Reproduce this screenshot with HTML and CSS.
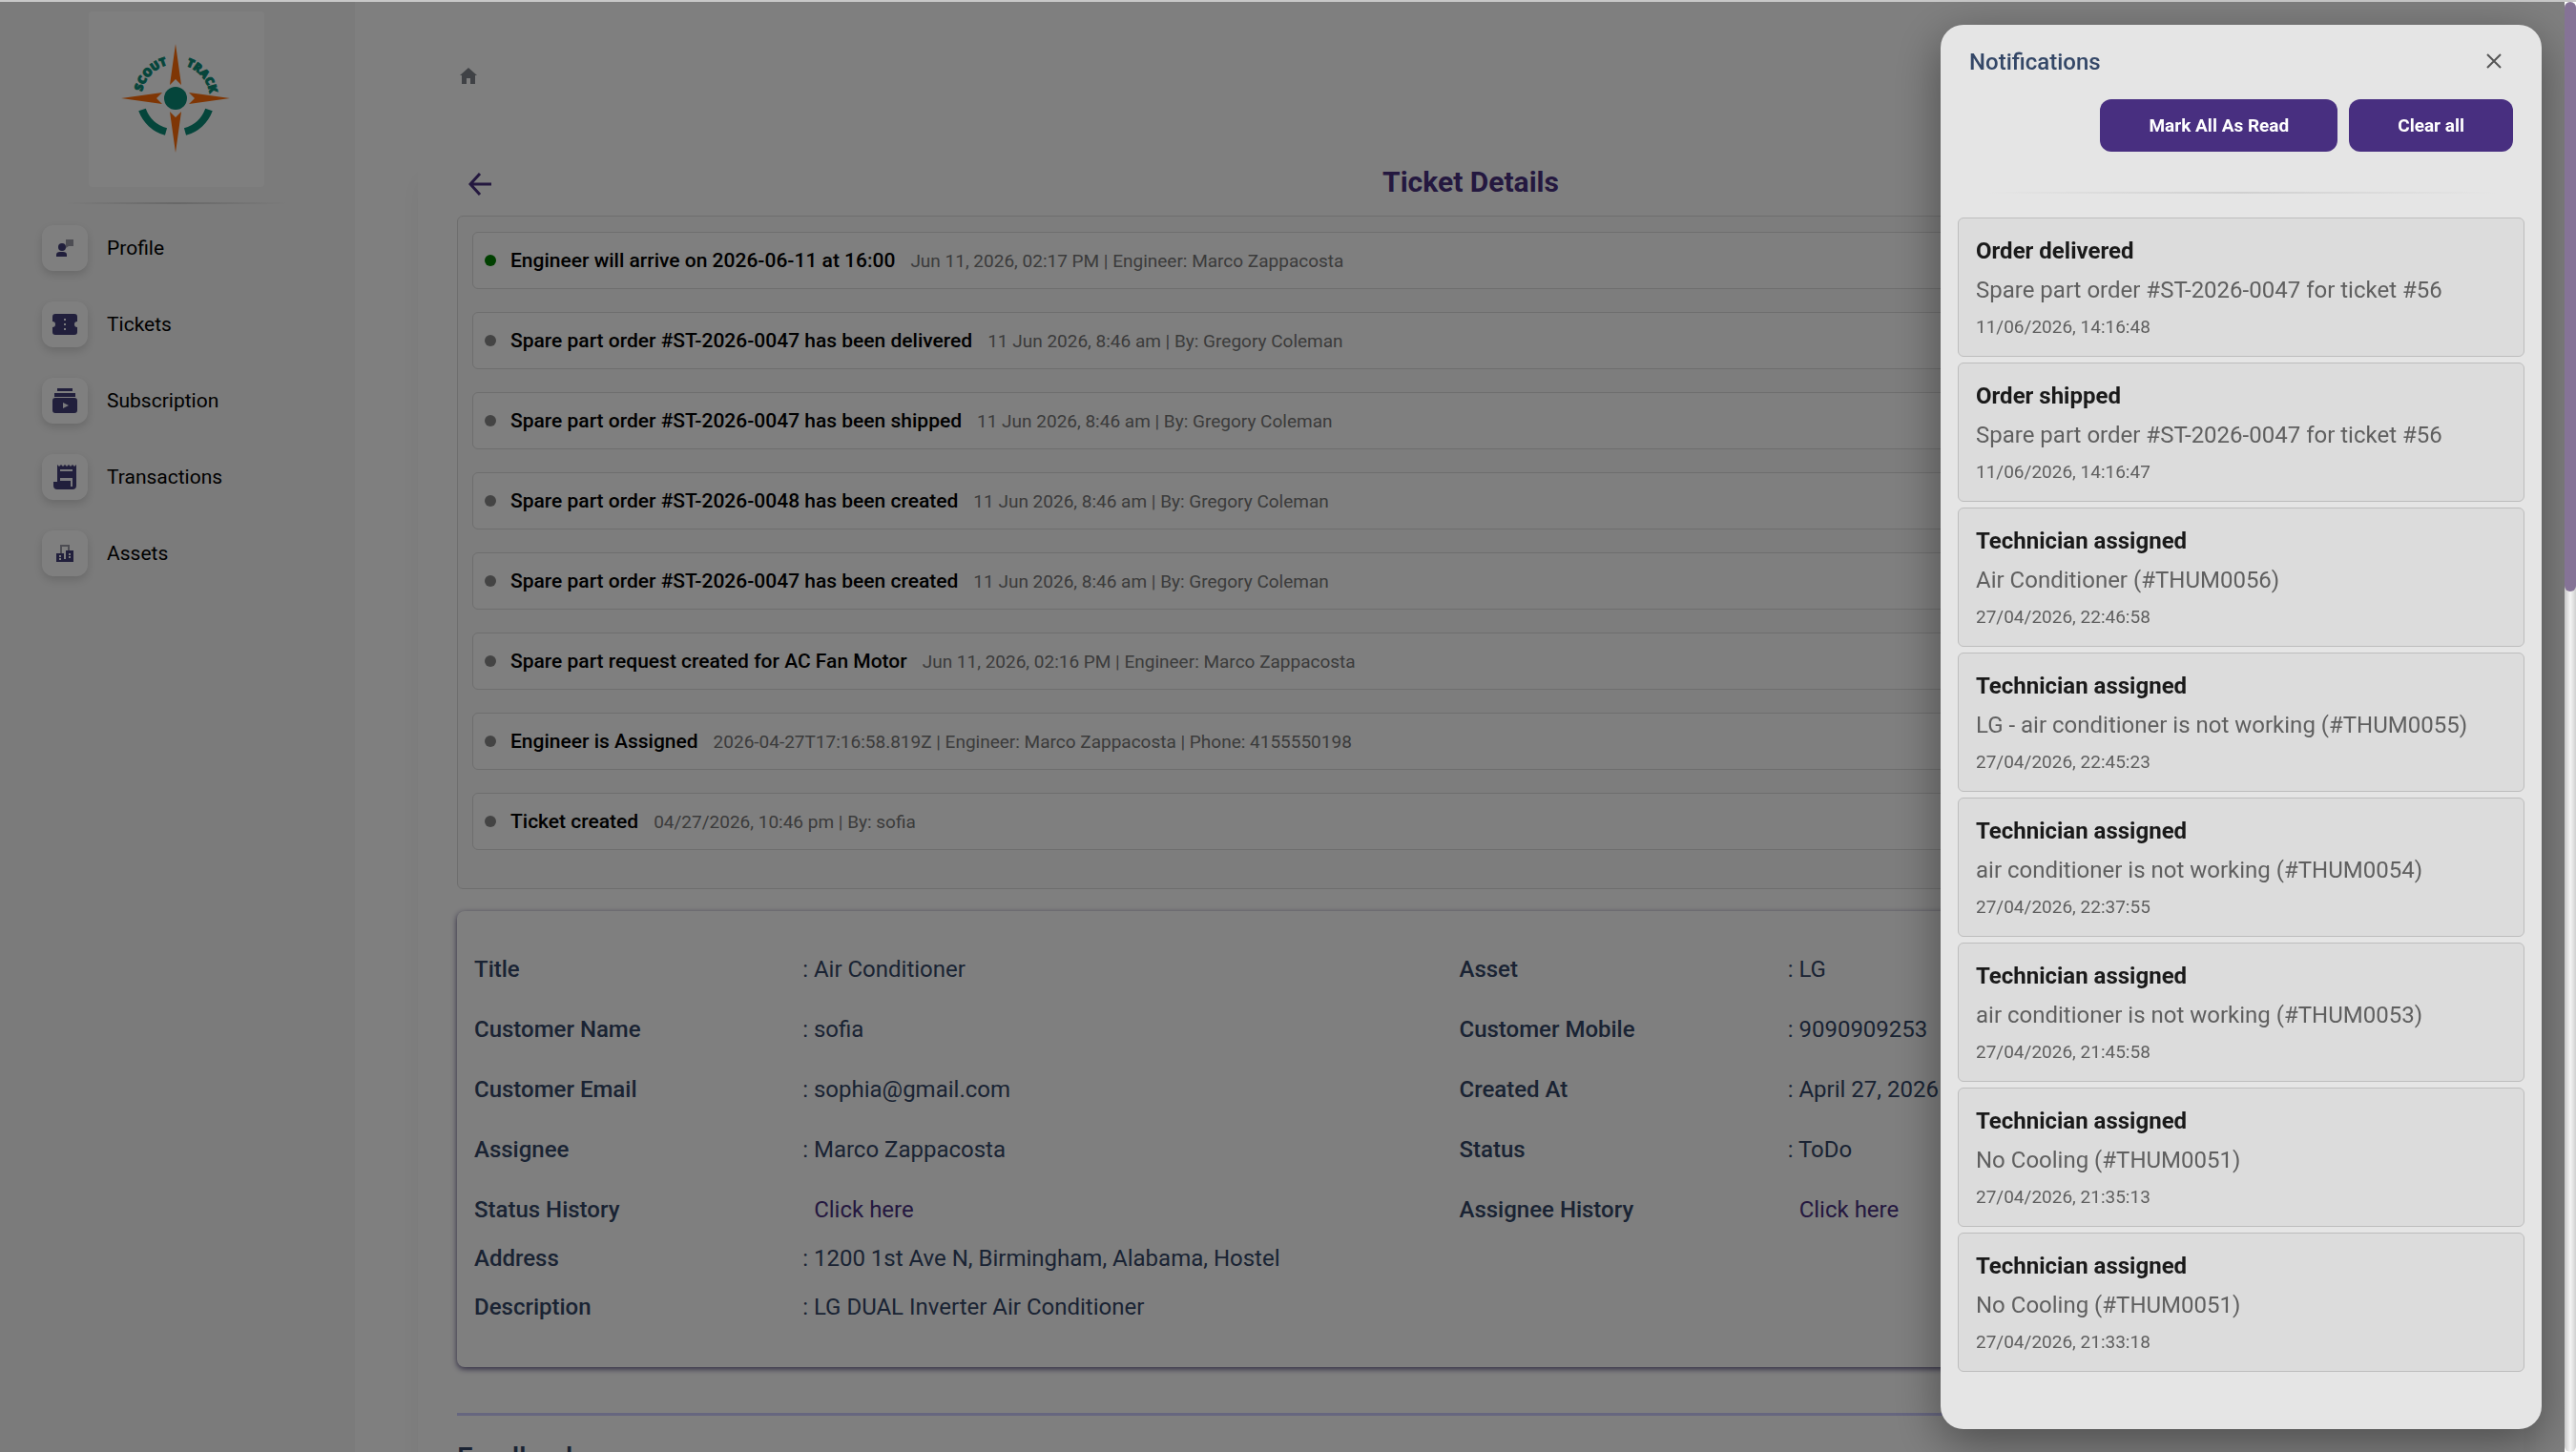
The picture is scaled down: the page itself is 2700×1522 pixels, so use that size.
FILE: index.html
```
<!DOCTYPE html>
<html lang="en">
  <head>
    <meta charset="UTF-8" />
    <meta name="viewport" content="width=device-width, initial-scale=1.0" />
    <title>Ticket Details</title>
    <link rel="stylesheet" href="styles.css" />
  </head>

  <body>
    <div class="page">
      <aside class="sidebar">
        <div class="logo">
          <svg viewBox="0 0 130 130" role="img" aria-label="Scout Track">
            <defs>
              <path id="arcLeft" d="M29 57A36 36 0 0 1 66 28" />
              <path id="arcRight" d="M75 30A36 36 0 0 1 99 72" />
            </defs>
            <g fill="#ff6d0a">
              <path d="M64 7l6 43-6-6-6 6z" />
              <path d="M64 121l6-43-6 6-6-6z" />
              <path d="M7 64l43 6-6-6 6-6z" />
              <path d="M121 64l-43 6 6-6-6-6z" />
            </g>
            <circle cx="64" cy="64" r="12" fill="#0b8a76" />
            <g fill="none" stroke="#0b8a76" stroke-width="8">
              <path d="M29 76A37 37 0 0 0 54 99" />
              <path d="M99 76A37 37 0 0 1 74 99" />
            </g>
            <text class="logo-text"><textPath href="#arcLeft">SCOUT</textPath></text>
            <text class="logo-text"><textPath href="#arcRight">TRACK</textPath></text>
          </svg>
        </div>
        <hr class="fade-line" />
        <nav class="menu">
          <a href="#">
            <span class="menu-icon">
              <svg class="small" viewBox="0 0 18 18">
                <circle cx="6" cy="8" r="4" />
                <path d="M0 18v-2q0-3 4-3h3q4 0 4 3v2z" />
                <path class="soft" d="M10 0h8v7h-5l-3 2z" />
              </svg>
            </span>
            Profile
          </a>
          <a href="#">
            <span class="menu-icon">
              <svg viewBox="0 0 26 26">
                <path d="M3 2h20q3 0 3 3v5a3 3 0 0 0 0 6v5q0 3-3 3H3q-3 0-3-3v-5a3 3 0 0 0 0-6V5q0-3 3-3z" />
                <path class="cut" d="M12 7h2v2h-2zM12 12h2v2h-2zM12 17h2v2h-2z" />
              </svg>
            </span>
            Tickets
          </a>
          <a href="#">
            <span class="menu-icon">
              <svg viewBox="0 0 26 26">
                <path d="M5 0h16v3H5zM2 5h22v4H2zM3 10h20q3 0 3 3v10q0 3-3 3H3q-3 0-3-3V13q0-3 3-3z" />
                <path class="cut" d="M11 15l6 3-6 3z" />
              </svg>
            </span>
            Subscription
          </a>
          <a href="#">
            <span class="menu-icon">
              <svg viewBox="0 0 26 26">
                <path d="M5 0l2 2 2-2 2 2 2-2 2 2 2-2 2 2 2-2 2 2 2-2v22q0 4-4 4H5q-4 0-4-4v-4h4z" />
                <path class="cut" d="M8 5h13v2H8zM8 14h13v9h-2v-6H8z" />
              </svg>
            </span>
            Transactions
          </a>
          <a href="#">
            <span class="menu-icon">
              <svg class="small" viewBox="0 0 18 18">
                <path class="soft" d="M4 0h10v7h-2V2H6v7H4z" />
                <path d="M0 9h8v9H0zM10 6h8v12h-8zM8 15h2v3H8z" />
                <path class="cut" d="M3 11h2v2H3zM3 14h2v2H3zM13 9h2v2h-2zM13 12h2v2h-2z" />
              </svg>
            </span>
            Assets
          </a>
        </nav>
      </aside>

      <main class="main">
        <a class="home" href="#" aria-label="Home">
          <svg viewBox="0 0 18 18">
            <path d="M9 0l9 8h-2v9h-5v-6H7v6H2V8H0z" />
          </svg>
        </a>

        <section class="content">
          <div class="heading">
            <button class="back" aria-label="Back">
              <svg viewBox="0 0 24 24">
                <path d="M12 1L2 12l10 11M2 12h22" />
              </svg>
            </button>
            <h1>Ticket Details</h1>
          </div>

          <ul class="timeline">
            <li class="active">
              <b>Engineer will arrive on 2026-06-11 at 16:00</b>
              <span>Jun 11, 2026, 02:17 PM | Engineer: Marco Zappacosta</span>
            </li>
            <li>
              <b>Spare part order #ST-2026-0047 has been delivered</b>
              <span>11 Jun 2026, 8:46 am | By: Gregory Coleman</span>
            </li>
            <li>
              <b>Spare part order #ST-2026-0047 has been shipped</b>
              <span>11 Jun 2026, 8:46 am | By: Gregory Coleman</span>
            </li>
            <li>
              <b>Spare part order #ST-2026-0048 has been created</b>
              <span>11 Jun 2026, 8:46 am | By: Gregory Coleman</span>
            </li>
            <li>
              <b>Spare part order #ST-2026-0047 has been created</b>
              <span>11 Jun 2026, 8:46 am | By: Gregory Coleman</span>
            </li>
            <li>
              <b>Spare part request created for AC Fan Motor</b>
              <span>Jun 11, 2026, 02:16 PM | Engineer: Marco Zappacosta</span>
            </li>
            <li>
              <b>Engineer is Assigned</b>
              <span>2026-04-27T17:16:58.819Z | Engineer: Marco Zappacosta | Phone: 4155550198</span>
            </li>
            <li>
              <b>Ticket created</b>
              <span>04/27/2026, 10:46 pm | By: sofia</span>
            </li>
          </ul>

          <dl class="details">
            <div><dt>Title</dt><dd>: Air Conditioner</dd></div>
            <div><dt>Asset</dt><dd>: LG</dd></div>
            <div><dt>Customer Name</dt><dd>: sofia</dd></div>
            <div><dt>Customer Mobile</dt><dd>: 9090909253</dd></div>
            <div><dt>Customer Email</dt><dd>: sophia@gmail.com</dd></div>
            <div><dt>Created At</dt><dd>: April 27, 2026</dd></div>
            <div><dt>Assignee</dt><dd>: Marco Zappacosta</dd></div>
            <div><dt>Status</dt><dd>: ToDo</dd></div>
            <div><dt>Status History</dt><dd><a href="#">Click here</a></dd></div>
            <div><dt>Assignee History</dt><dd><a href="#">Click here</a></dd></div>
            <div class="wide"><dt>Address</dt><dd>: 1200 1st Ave N, Birmingham, Alabama, Hostel</dd></div>
            <div class="wide"><dt>Description</dt><dd>: LG DUAL Inverter Air Conditioner</dd></div>
          </dl>

          <hr class="split" />
          <h2>Feedback</h2>
        </section>
      </main>
    </div>

    <div class="overlay"></div>

    <div class="drawer" role="dialog" aria-labelledby="drawer-title">
      <div class="drawer-head">
        <h3 id="drawer-title">Notifications</h3>
        <button class="close" aria-label="Close">
          <svg viewBox="0 0 16 16"><path d="M1 1l14 14M15 1L1 15" /></svg>
        </button>
      </div>
      <div class="drawer-actions">
        <button>Mark All As Read</button>
        <button>Clear all</button>
      </div>
      <hr class="fade-line" />
      <ul class="notices">
        <li>
          <h4>Order delivered</h4>
          <p>Spare part order #ST-2026-0047 for ticket #56</p>
          <time>11/06/2026, 14:16:48</time>
        </li>
        <li>
          <h4>Order shipped</h4>
          <p>Spare part order #ST-2026-0047 for ticket #56</p>
          <time>11/06/2026, 14:16:47</time>
        </li>
        <li>
          <h4>Technician assigned</h4>
          <p>Air Conditioner (#THUM0056)</p>
          <time>27/04/2026, 22:46:58</time>
        </li>
        <li>
          <h4>Technician assigned</h4>
          <p>LG - air conditioner is not working (#THUM0055)</p>
          <time>27/04/2026, 22:45:23</time>
        </li>
        <li>
          <h4>Technician assigned</h4>
          <p>air conditioner is not working (#THUM0054)</p>
          <time>27/04/2026, 22:37:55</time>
        </li>
        <li>
          <h4>Technician assigned</h4>
          <p>air conditioner is not working (#THUM0053)</p>
          <time>27/04/2026, 21:45:58</time>
        </li>
        <li>
          <h4>Technician assigned</h4>
          <p>No Cooling (#THUM0051)</p>
          <time>27/04/2026, 21:35:13</time>
        </li>
        <li>
          <h4>Technician assigned</h4>
          <p>No Cooling (#THUM0051)</p>
          <time>27/04/2026, 21:33:18</time>
        </li>
      </ul>
    </div>

    <div class="scrollbar"><div class="thumb"></div></div>
  </body>
</html>
```
FILE: styles.css
```
* {
  margin: 0;
  padding: 0;
  box-sizing: border-box;
}

body {
  height: 100vh;
  overflow: hidden;
  border-top: 2px solid #c8c8c8;
  background: #fff;
  font-family: Roboto, "Liberation Sans", sans-serif;
  color: #344767;
}

button {
  border: none;
  background: none;
  font-family: inherit;
  cursor: pointer;
}

a {
  text-decoration: none;
}

ul {
  list-style: none;
}

.page {
  display: flex;
  height: 100%;
  padding-right: 12px;
}

/* sidebar */
.sidebar {
  width: 372px;
  flex-shrink: 0;
  padding: 10px 2px 0 0;
  background: #f6f6f6;
}

.logo {
  display: flex;
  align-items: center;
  justify-content: center;
  width: 184px;
  height: 184px;
  margin: 0 auto;
  border-radius: 4px;
  background: #fff;
}

.logo svg {
  width: 130px;
  height: 130px;
}

.logo-text {
  font: 800 12px "Open Sans", sans-serif;
  fill: #0b8a76;
  stroke: #0b8a76;
}

.fade-line {
  height: 2px;
  border: none;
  background: linear-gradient(to right, transparent, #d0d0d0, transparent);
}

.sidebar .fade-line {
  margin: 16px 70px 0;
}

.menu {
  display: flex;
  flex-direction: column;
  gap: 32px;
  padding: 22px 44px;
}

.menu a {
  display: flex;
  align-items: center;
  gap: 20px;
  font-size: 21px;
  color: #000;
}

.menu-icon {
  display: flex;
  align-items: center;
  justify-content: center;
  width: 48px;
  height: 48px;
  border-radius: 12px;
  background: #fff;
  box-shadow: 0 4px 8px rgba(0, 0, 0, 0.14);
}

.menu-icon svg {
  width: 26px;
  height: 26px;
  fill: #423f78;
}

.menu-icon .small {
  width: 18px;
  height: 18px;
}

.menu-icon .soft {
  fill: #9a9aa6;
}

.menu-icon .cut {
  fill: #f4f4fa;
}

/* main */
.main {
  flex: 1;
  padding: 69px 43px 0 66px;
}

.home {
  display: block;
  height: 18px;
  padding-left: 44px;
}

.home svg {
  display: block;
  width: 18px;
  height: 18px;
  fill: #80858c;
}

.content {
  margin-top: 76px;
  padding: 0 41px 60px;
  border-radius: 12px;
  box-shadow: 0 20px 27px rgba(0, 0, 0, 0.05);
}

.heading {
  display: grid;
  grid-template-columns: 48px 1fr 48px;
  align-items: start;
  height: 61px;
  padding-top: 5px;
}

.heading h1 {
  font-size: 30px;
  line-height: 42px;
  font-weight: 700;
  text-align: center;
  color: #48307f;
}

.back {
  height: 48px;
}

.back svg {
  width: 24px;
  height: 24px;
  fill: none;
  stroke: #48307f;
  stroke-width: 3;
}

.timeline {
  display: flex;
  flex-direction: column;
  gap: 24px;
  padding: 16px 16px 40px 15px;
  border: 1px solid #ddd;
  border-radius: 6px;
  background: #fafafa;
}

.timeline li {
  display: flex;
  align-items: center;
  height: 60px;
  padding: 0 12px;
  border: 1px solid #ddd;
  border-radius: 6px;
  background: #fff;
}

.timeline li::before {
  content: "";
  width: 12px;
  height: 12px;
  margin-right: 15px;
  border-radius: 50%;
  background: #888;
}

.timeline .active::before {
  background: #008000;
}

.timeline b {
  font-size: 21px;
  font-weight: 500;
  color: #000;
}

.timeline span {
  margin-left: 16px;
  font-size: 19px;
  color: #777;
}

.details {
  display: grid;
  grid-template-columns: 1fr 1fr;
  margin-top: 23px;
  padding: 16px 42px 45px 18px;
  border-radius: 8px;
  background: #fff;
  box-shadow: 0 2px 6px #5a5080;
}

.details div {
  display: grid;
  grid-template-columns: 1fr 2fr;
  align-items: end;
  height: 63px;
  font-size: 24px;
  line-height: 36px;
}

.details .wide {
  grid-column: 1 / 3;
  grid-template-columns: 1fr 5fr;
  height: 51px;
}

.details dt {
  font-weight: 500;
}

.details a {
  padding-left: 12px;
  color: #48307f;
}

.split {
  height: 3px;
  margin-top: 48px;
  border: none;
  background: #ccccff;
}

.content h2 {
  margin-top: 24px;
  font-size: 30px;
  line-height: 40px;
  font-weight: 500;
}

.overlay {
  position: fixed;
  inset: 2px 12px 0 0;
  background: rgba(0, 0, 0, 0.5);
}

/* notifications */
.drawer {
  position: fixed;
  top: 26px;
  right: 36px;
  bottom: 24px;
  width: 630px;
  padding: 0 18px;
  border-radius: 24px;
  background: #e5e5e5;
  box-shadow: 0 14px 50px rgba(0, 0, 0, 0.4);
}

.drawer-head {
  display: flex;
  align-items: center;
  justify-content: space-between;
  height: 78px;
  padding: 0 12px;
}

.drawer-head h3 {
  font-size: 24px;
  font-weight: 500;
}

.close {
  width: 40px;
  height: 40px;
}

.close svg {
  width: 16px;
  height: 16px;
  fill: none;
  stroke: #555;
  stroke-width: 2;
}

.drawer-actions {
  display: flex;
  justify-content: flex-end;
  gap: 12px;
  padding: 0 12px;
}

.drawer-actions button {
  height: 55px;
  padding: 0 51px;
  border-radius: 12px;
  background: #482f80;
  font-size: 19px;
  font-weight: 700;
  color: #fff;
}

.drawer .fade-line {
  margin: 42px 30px 25px;
}

.notices {
  display: flex;
  flex-direction: column;
  gap: 6px;
}

.notices li {
  padding: 14px 18px 12px;
  border: 1px solid #bdbdbd;
  border-radius: 6px;
  background: #dcdcdc;
}

.notices h4 {
  font-size: 24px;
  line-height: 40px;
  font-weight: 700;
  color: #1a1a1a;
}

.notices p {
  font-size: 24px;
  line-height: 42px;
  color: #5f5f5f;
}

.notices time {
  display: block;
  font-size: 19px;
  line-height: 36px;
  color: #5f5f5f;
}

.scrollbar {
  position: fixed;
  top: 2px;
  right: 0;
  bottom: 0;
  width: 12px;
  border-radius: 6px;
  background: linear-gradient(to right, #c8c8c8, #f4f4f4, #d0d0d0);
}

.thumb {
  height: 618px;
  border-radius: 6px;
  background: #857396;
}
```
